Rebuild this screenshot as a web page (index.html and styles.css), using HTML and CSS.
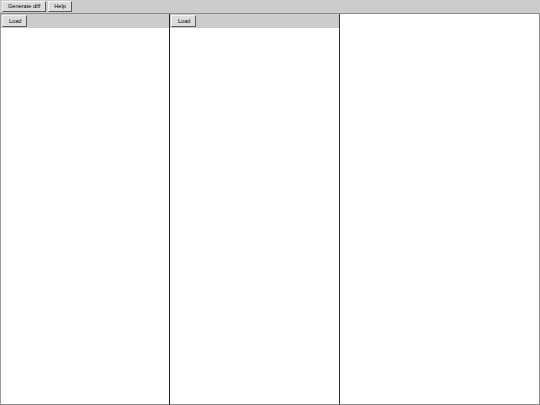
FILE: index.html
```html
<!DOCTYPE html>
<html>
<head>
<meta charset="utf-8">
<link rel="stylesheet" href="styles.css">
</head>
<body>
<div class="app">
  <div class="toolbar">
    <button class="btn">Generate diff</button>
    <button class="btn">Help</button>
  </div>
  <div class="main">
    <div class="pane pane-left">
      <div class="pane-head"><button class="btn btn-load">Load</button></div>
      <div class="pane-body"></div>
    </div>
    <div class="pane pane-mid">
      <div class="pane-head"><button class="btn btn-load">Load</button></div>
      <div class="pane-body"></div>
    </div>
    <div class="pane pane-right">
      <div class="pane-body"></div>
    </div>
  </div>
</div>
</body>
</html>
```
FILE: styles.css
```css
html, body {
  margin: 0;
  padding: 0;
  background: #fff;
}
.app {
  width: 540px;
  height: 405px;
  display: flex;
  flex-direction: column;
  font-family: "Liberation Sans", Arial, sans-serif;
}
.toolbar {
  box-sizing: border-box;
  padding: 1px 2px 0 2px;
  display: flex;
  gap: 2px;
  background: #cccccc;
  border-bottom: 1px solid #8a8a8a;
  flex: none;
  height: 14px;
}
.btn {
  font-family: "Liberation Sans", Arial, sans-serif;
  font-size: 5.6px;
  height: 11px;
  padding: 0 5px;
  margin: 0;
  background: #dcdcdc;
  color: #000;
  border: 1px solid;
  border-color: #f4f4f4 #5a5a5a #5a5a5a #f4f4f4;
  line-height: 9px;
  box-sizing: border-box;
}
.btn-load {
  height: 12px;
  padding: 0 5px 0 6px;
}
.main {
  flex: 1;
  display: flex;
  min-height: 0;
}
.pane {
  display: flex;
  flex-direction: column;
  box-sizing: border-box;
  border-bottom: 1px solid #888;
}
.pane-left {
  width: 170px;
  border-left: 1px solid #999;
  border-right: 1px solid #222;
}
.pane-mid {
  width: 170px;
  border-right: 1px solid #333;
}
.pane-right {
  flex: 1;
  border-right: 1px solid #888;
}
.pane-head {
  height: 14px;
  box-sizing: border-box;
  padding: 1px 0 0 1px;
  background: #cccccc;
  flex: none;
  display: flex;
  align-items: flex-start;
}
.pane-body {
  flex: 1;
  background: #fff;
}
```
